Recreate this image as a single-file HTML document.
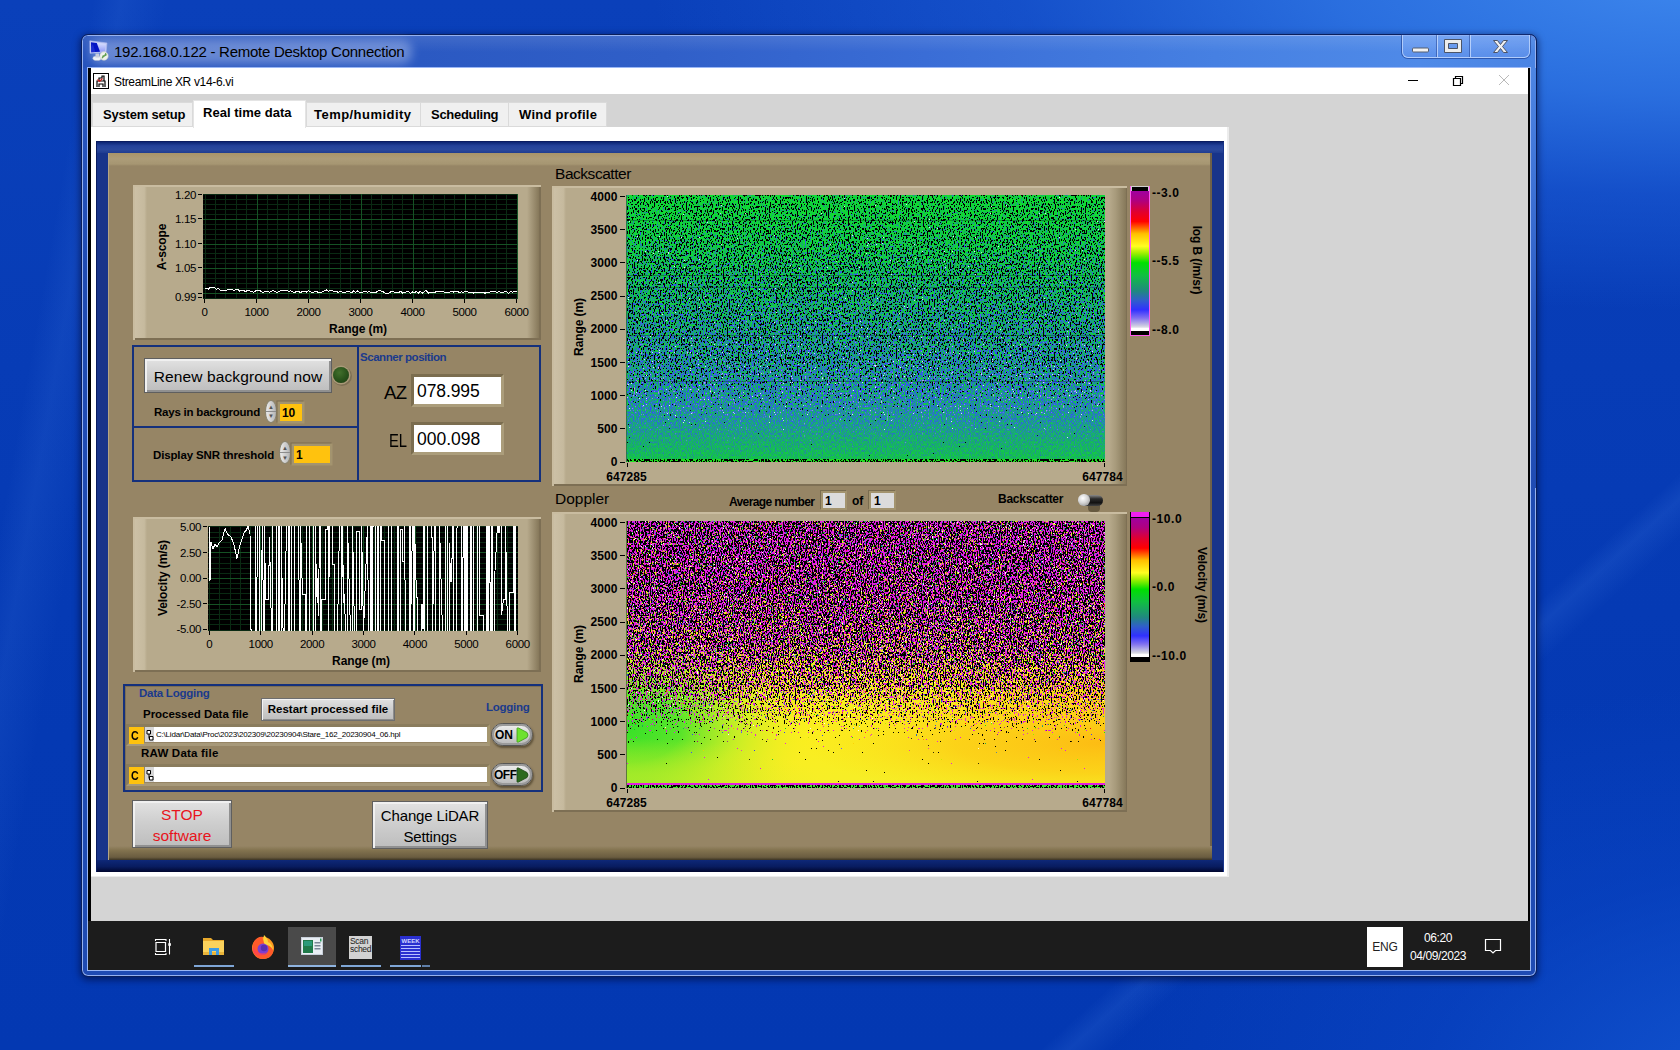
<!DOCTYPE html>
<html lang="en">
<head>
<meta charset="utf-8">
<title>192.168.0.122 - Remote Desktop Connection</title>
<style>
*{box-sizing:border-box;margin:0;padding:0}
html,body{width:1680px;height:1050px;overflow:hidden}
body{position:relative;font-family:"Liberation Sans",sans-serif;color:#000;font-size:12px;
 background:
  linear-gradient(138deg, rgba(90,150,245,0) 0, rgba(90,150,245,0) 77.500%, rgba(90,150,245,.13) 78.500%, rgba(90,150,245,0) 80%, rgba(90,150,245,0) 100%),
  linear-gradient(100deg, rgba(90,150,245,0) 0, rgba(90,150,245,0) 5%, rgba(90,150,245,.1) 6.500%, rgba(90,150,245,0) 9%, rgba(90,150,245,0) 100%),
  radial-gradient(ellipse 700px 420px at 1800px 1100px, rgba(24,96,220,.75) 0, rgba(12,74,204,.4) 55%, rgba(6,60,190,0) 100%),
  radial-gradient(ellipse 1050px 330px at 1700px -20px, rgba(62,136,238,.98) 0, rgba(50,122,232,.8) 35%, rgba(34,100,222,.45) 65%, rgba(12,70,196,0) 100%),
  linear-gradient(180deg,#0a40ba 0,#073cb6 35%,#0439b3 70%,#0338b2 100%);
}
.abs,.t,div,span,svg{position:absolute}
.t{white-space:nowrap;line-height:1}
.b{font-weight:bold}
.c{text-align:center}
/* outer RDP window */
#win{left:81px;top:34px;width:1456px;height:943px;border-radius:7px;
 background:#1f4bb3;
 border:1px solid #0a1f5c;box-shadow:0 2px 7px 1px rgba(0,8,50,.6), inset 0 0 0 1px rgba(170,195,250,.85)}
#wtitle{left:83px;top:36px;width:1452px;height:32px;border-radius:5px 5px 0 0;
 background:linear-gradient(90deg,#2653bd 0,#2a58c1 20%,#305fc8 40%,#3a6dd6 58%,#4680e2 78%,#4f8ae8 92%,#4a84e4 100%)}
#wright{left:1531px;top:68px;width:5px;height:420px;background:linear-gradient(180deg,#4e86e4 0,#3f74d8 25%,#2a5ac2 60%,#1f4bb3 100%)}
#wleft{left:83px;top:68px;width:5px;height:200px;background:linear-gradient(180deg,#2a58c2 0,#1f4bb3 100%)}
#client{left:88px;top:68px;width:1442px;height:902px;background:#d4d4d4;box-shadow:0 0 0 1px rgba(160,188,248,.95)}
/* LabVIEW */
.tan{background:#968565}
.plotpanel{background:#b7aa8c;box-shadow:inset 2px 2px 0 #c9bca0, inset -2px -2px 0 #7d6f54}
.lvbtn{background:linear-gradient(180deg,#e2e2e2 0,#cfcfcf 45%,#bdbdbd 100%);border:1px solid #6e6e6e;box-shadow:inset 1px 1px 0 #f4f4f4, inset -1px -1px 0 #8d8d8d;text-align:center}
.lbl{font-weight:bold;font-size:11.5px;letter-spacing:-.1px}
.tick{font-weight:bold;font-size:12px;letter-spacing:.55px}
.sm{font-size:11.5px}
.tk{font-size:11.5px;letter-spacing:-.35px}
.tkb{font-size:12px;font-weight:bold;letter-spacing:.1px}
.grp{border:2px solid #14307c}
.ybox{background:#ffc20e;box-shadow:0 0 0 2.5px #a3946f, -1px -1px 0 2.5px #7a6d50}
.wbox{background:#fff;box-shadow:0 0 0 3px #a99a76, -1px -1px 0 3px #7a6d50, 1px 1px 0 3px #b8aa88}
</style>
</head>
<body>
<!-- ===== outer Remote Desktop window ===== -->
<div id="win"></div>
<div id="wtitle"></div><div id="wright"></div><div id="wleft"></div>
<div class="abs" style="left:83px;top:36px;width:1452px;height:16px;border-radius:5px 5px 0 0;background:linear-gradient(180deg,rgba(255,255,255,.1),rgba(255,255,255,0))"></div>
<!-- title glow + text -->
<div class="abs" style="left:90px;top:40px;width:322px;height:24px;border-radius:10px;background:rgba(235,240,255,.33);filter:blur(5px)"></div>
<svg style="left:88px;top:39px" width="24" height="24" viewBox="0 0 24 24">
 <defs><linearGradient id="mon" x1="0" y1="0" x2="0" y2="1"><stop offset="0" stop-color="#dfe6ff"/><stop offset="1" stop-color="#8f98f6"/></linearGradient></defs>
 <ellipse cx="9" cy="19.300" rx="4.200" ry="2.300" fill="#eef0f6" stroke="#aab0c4" stroke-width=".4"/>
 <path d="M7.500 14.500h3.500v4h-3.500z" fill="#c9cede"/>
 <path d="M1.800 1.800L19 4l-1 9.300L2 14.300z" fill="#c4ccf4" stroke="#aeb8ee" stroke-width=".6" stroke-linejoin="round"/>
 <path d="M3 3.200L17.800 5l-.8 7.500L3.200 13.200z" fill="url(#mon)"/>
 <path d="M3 3.200L8.800 3.900 12 12.700 3.200 13.200z" fill="#0414c4"/>
 <path d="M3.100 8l1.800-3 2.500 8-4.200.2z" fill="#2a3ad8" opacity=".6"/>
 <circle cx="16" cy="17" r="4.200" fill="#eef1ec" stroke="#c8ccc6" stroke-width=".6"/>
 <path d="M14 19.200l1.200-2.900.9 1.100zM16.200 17.200l1.500-3 .6 2z" fill="#5a9a4a" stroke="#5a9a4a" stroke-width=".8" stroke-linejoin="round"/>
</svg>
<div class="t" id="rdptitle" style="left:114px;top:44px;font-size:15px;color:#000;letter-spacing:-0.26px">192.168.0.122 - Remote Desktop Connection</div>
<!-- caption buttons -->
<div class="abs" style="left:1402px;top:35px;width:128px;height:23px;border:1px solid rgba(200,220,255,.75);border-top:none;border-radius:0 0 6px 6px;background:linear-gradient(180deg,rgba(140,180,250,.55),rgba(110,155,240,.45));box-shadow:0 0 0 1px rgba(20,50,130,.55)"></div>
<div class="abs" style="left:1437px;top:35px;width:1px;height:22px;background:rgba(200,220,255,.8);box-shadow:-1px 0 0 rgba(30,60,140,.5)"></div>
<div class="abs" style="left:1470px;top:35px;width:1px;height:22px;background:rgba(200,220,255,.8);box-shadow:-1px 0 0 rgba(30,60,140,.5)"></div>
<svg style="left:1402px;top:35px" width="128" height="23" viewBox="0 0 128 23">
 <rect x="10.5" y="13" width="16" height="4" rx="1" fill="#f2f2f2" stroke="#555e70" stroke-width="1"/>
 <path d="M42.5 4.500h17v13h-17zM46.500 8.500h9v5h-9z" fill="#ededed" fill-rule="evenodd" stroke="#4c5568" stroke-width="1"/>
 <path d="M91.500 5.500h4l3 4 3-4h4l-5 6 5 6h-4l-3-4-3 4h-4l5-6z" fill="#f0f0f0" stroke="#4c5568" stroke-width="1" stroke-linejoin="round"/>
</svg>
<!-- ===== client (remote session) ===== -->
<div id="client"></div>
<div class="abs" style="left:88px;top:68px;width:3px;height:853px;background:#000"></div>
<div class="abs" style="left:1528px;top:68px;width:2px;height:853px;background:#000"></div>
<!-- inner title bar -->
<div class="abs" style="left:91px;top:68px;width:1437px;height:26px;background:#fff"></div>
<svg style="left:93px;top:73px" width="16" height="16" viewBox="0 0 16 16">
 <rect x=".5" y=".5" width="15" height="15" fill="#fff" stroke="#000" stroke-width="1"/>
 <path d="M4 14V8h8v6M6 14v-3h4v3M6 8V5h3V3h2v5" fill="none" stroke="#000" stroke-width="1.2"/>
 <path d="M4.500 6.500l2 2 3-3" fill="none" stroke="#d02020" stroke-width="1.2"/>
</svg>
<div class="t" id="vititle" style="left:114px;top:76px;font-size:12px;letter-spacing:-0.34px">StreamLine XR v14-6.vi</div>
<svg style="left:1400px;top:68px" width="128" height="26" viewBox="0 0 128 26">
 <path d="M8 12.500h10" stroke="#000" stroke-width="1"/>
 <path d="M53.500 10.500h7v7h-7zM55.500 10.500v-2h7v7h-2" fill="none" stroke="#000" stroke-width="1.200"/>
 <path d="M99 7l10 10M109 7l-10 10" stroke="#b9b9b9" stroke-width="1"/>
</svg>
<!-- tabs -->
<div class="abs" style="left:91px;top:127px;width:1138px;height:750px;background:#ececec"></div>
<div class="abs" style="left:91px;top:127px;width:1135.500px;height:748.500px;background:#fff"></div>
<div class="abs" style="left:92px;top:101.500px;width:101px;height:25px;background:#f0f0f0;border:1px solid #dadada"></div>
<div class="abs" style="left:306px;top:101.500px;width:115px;height:25px;background:#f0f0f0;border:1px solid #dadada"></div>
<div class="abs" style="left:420px;top:101.500px;width:89px;height:25px;background:#f0f0f0;border:1px solid #dadada"></div>
<div class="abs" style="left:508px;top:101.500px;width:99px;height:25px;background:#f0f0f0;border:1px solid #dadada"></div>
<div class="abs" style="left:193px;top:100px;width:113px;height:28px;background:#fff;border:1px solid #e4e4e4;border-bottom:none"></div>
<div class="t b" id="tab1" style="margin-top:1px;left:103px;top:107px;font-size:13px;letter-spacing:-0.19px">System setup</div>
<div class="t b" id="tab2" style="margin-top:1px;left:203px;top:105px;font-size:13px;letter-spacing:0.03px">Real time data</div>
<div class="t b" id="tab3" style="margin-top:1px;left:314px;top:107px;font-size:13px;letter-spacing:0.46px">Temp/humidity</div>
<div class="t b" id="tab4" style="margin-top:1px;left:431px;top:107px;font-size:13px;letter-spacing:-0.28px">Scheduling</div>
<div class="t b" id="tab5" style="margin-top:1px;left:519px;top:107px;font-size:13px;letter-spacing:0.27px">Wind profile</div>
<!-- ===== LabVIEW front panel ===== -->
<div class="abs" style="left:96px;top:141px;width:1128px;height:731px;background:#18348a;box-shadow:inset 1px 1px 0 #0a1c60"></div>
<div class="abs" style="left:97px;top:142px;width:1126px;height:11px;background:linear-gradient(180deg,#0c2574 0,#24429a 35%,#2a489c 70%,#1f3c90 100%)"></div>
<div class="abs" style="left:97px;top:860px;width:1126px;height:12px;background:linear-gradient(180deg,#0e2878 0,#081c60 55%,#01062e 100%)"></div>
<div class="abs tan" style="left:108px;top:153px;width:1104px;height:707px;box-shadow:inset 1px 0 0 #b5a583, inset -2px 0 0 #6f6148"></div>
<div class="abs" style="left:109px;top:153px;width:1101px;height:13px;background:linear-gradient(180deg,#a89469 0,#ac9c78 45%,#a69672 85%,#968565 100%)"></div>
<div class="abs" style="left:109px;top:846px;width:1103px;height:14px;background:linear-gradient(180deg,#968565 0,#83734f 30%,#6a5c40 80%,#3c3424 100%)"></div>

<!-- A-scope panel -->
<div class="abs plotpanel" style="left:133px;top:185px;width:408px;height:155px"></div>
<div class="abs" style="left:135px;top:187px;width:12px;height:151px;background:linear-gradient(90deg,#ccc0a6 0,#c6ba9e 78%,#b7aa8c 100%)"></div>
<div class="abs" style="left:527px;top:187px;width:12px;height:151px;background:linear-gradient(90deg,#b7aa8c,#86785a)"></div>
<svg style="left:203px;top:194px" width="315" height="105" viewBox="0 0 315 105">
 <rect width="315" height="105" fill="#000"/>
 <g stroke="#0a2a13" stroke-width="1"><path d="M2.5 0V105"/><path d="M12.5 0V105"/><path d="M22.5 0V105"/><path d="M33.5 0V105"/><path d="M43.5 0V105"/><path d="M64.5 0V105"/><path d="M74.5 0V105"/><path d="M85.5 0V105"/><path d="M95.5 0V105"/><path d="M116.5 0V105"/><path d="M126.5 0V105"/><path d="M137.5 0V105"/><path d="M147.5 0V105"/><path d="M168.5 0V105"/><path d="M178.5 0V105"/><path d="M189.5 0V105"/><path d="M199.5 0V105"/><path d="M220.5 0V105"/><path d="M230.5 0V105"/><path d="M241.5 0V105"/><path d="M251.5 0V105"/><path d="M272.5 0V105"/><path d="M282.5 0V105"/><path d="M293.5 0V105"/><path d="M303.5 0V105"/><path d="M0 0.5H315"/><path d="M0 5.5H315"/><path d="M0 10.5H315"/><path d="M0 15.5H315"/><path d="M0 20.5H315"/><path d="M0 30.5H315"/><path d="M0 35.5H315"/><path d="M0 40.5H315"/><path d="M0 45.5H315"/><path d="M0 54.5H315"/><path d="M0 59.5H315"/><path d="M0 64.5H315"/><path d="M0 69.5H315"/><path d="M0 79.5H315"/><path d="M0 84.5H315"/><path d="M0 89.5H315"/><path d="M0 94.5H315"/><path d="M0 104.5H315"/></g>
 <g stroke="#155224" stroke-width="1"><path d="M54.5 0V105"/><path d="M106.5 0V105"/><path d="M158.5 0V105"/><path d="M210.5 0V105"/><path d="M262.5 0V105"/><path d="M314.5 0V105"/><path d="M0 25.5H315"/><path d="M0 50.5H315"/><path d="M0 74.5H315"/><path d="M0 99.5H315"/></g>
 <polyline fill="none" stroke="#fff" stroke-width="1" shape-rendering="crispEdges" points="1.5,93.8 3.5,94.3 5.4,95.1 7.4,93.2 9.3,93.3 11.3,93.6 13.3,95.2 15.2,94.2 17.2,96.1 19.2,96.1 21.1,96.3 23.1,97.2 25,95 27,95.6 29,95.3 30.9,96.8 32.9,95.4 34.9,95.3 36.8,97.1 38.8,96.2 40.7,96.6 42.7,97.6 44.7,96.2 46.6,97 48.6,97.6 50.6,98.3 52.5,96.9 54.5,96.3 56.4,96.1 58.4,97.9 60.4,98.2 62.3,97.8 64.3,97.5 66.3,98.2 68.2,97.4 70.2,96.4 72.1,97.8 74.1,98.3 76.1,97.3 78,96.5 80,96.9 82,96.6 83.9,96.8 85.9,97.4 87.8,96.8 89.8,97.8 91.8,98.5 93.7,97.3 95.7,97.5 97.7,98.8 99.6,97.1 101.6,97.2 103.5,98.1 105.5,96.8 107.5,97.6 109.4,98.9 111.4,98 113.3,97.1 115.3,98.8 117.3,98.8 119.2,97.7 121.2,97.1 123.2,95.8 125.1,97.3 127.1,96.4 129,96.9 131,97.1 133,97 134.9,98.3 136.9,97.5 138.9,97.8 140.8,98.8 142.8,98 144.7,97.2 146.7,97.7 148.7,98.8 150.6,97 152.6,98.2 154.6,97 156.5,98.2 158.5,98.9 160.4,97.6 162.4,97.4 164.4,98.2 166.3,97.7 168.3,98.8 170.3,98.9 172.2,98.8 174.2,97.5 176.1,96.6 178.1,97.1 180.1,97.6 182,99.1 184,99.1 186,99.2 187.9,97.5 189.9,97.5 191.8,98.4 193.8,98.9 195.8,98.5 197.7,97.2 199.7,99.1 201.7,98.7 203.6,97.5 205.6,97.8 207.5,99.2 209.5,98 211.5,98.7 213.4,97.4 215.4,99.1 217.3,97.4 219.3,99.2 221.3,97.8 223.2,96.2 225.2,99.2 227.2,98.2 229.1,98 231.1,98.9 233,97.6 235,97.6 237,97.7 238.9,97.4 240.9,97.9 242.9,98.4 244.8,98 246.8,98.2 248.7,97 250.7,98.1 252.7,97.1 254.6,97.5 256.6,98.7 258.6,97.8 260.5,98.3 262.5,97.3 264.4,97.6 266.4,98.8 268.4,98.3 270.3,99.1 272.3,98.4 274.3,98.2 276.2,98.1 278.2,98.1 280.1,98.6 282.1,99.2 284.1,98.3 286,98.9 288,97.4 290,97.3 291.9,97.3 293.9,98.8 295.8,97.4 297.8,98.5 299.8,99 301.7,97.6 303.7,98 305.7,99.3 307.6,97.5 309.6,98.2 311.5,97.5 313.5,97.5"/>
</svg>
<div class="t tk" style="left:136px;top:189.5px;width:60px;text-align:right;">1.20</div>
<div class="t tk" style="left:136px;top:214px;width:60px;text-align:right;">1.15</div>
<div class="t tk" style="left:136px;top:238.5px;width:60px;text-align:right;">1.10</div>
<div class="t tk" style="left:136px;top:262.5px;width:60px;text-align:right;">1.05</div>
<div class="t tk" style="left:136px;top:291.5px;width:60px;text-align:right;">0.99</div>
<div class="abs" style="left:197.5px;top:194px;width:4.5px;height:1px;background:#000"></div>
<div class="abs" style="left:197.5px;top:218px;width:4.5px;height:1px;background:#000"></div>
<div class="abs" style="left:197.5px;top:243px;width:4.5px;height:1px;background:#000"></div>
<div class="abs" style="left:197.5px;top:267px;width:4.5px;height:1px;background:#000"></div>
<div class="abs" style="left:197.5px;top:293px;width:4.5px;height:1px;background:#000"></div>
<div class="abs" style="left:197.5px;top:297px;width:4.5px;height:1px;background:#000"></div>
<div class="t tk c" style="left:174.5px;top:306.5px;width:60px;">0</div>
<div class="abs" style="left:204px;top:299px;width:1px;height:4px;background:#000"></div>
<div class="t tk c" style="left:226.5px;top:306.5px;width:60px;">1000</div>
<div class="abs" style="left:256px;top:299px;width:1px;height:4px;background:#000"></div>
<div class="t tk c" style="left:278.5px;top:306.5px;width:60px;">2000</div>
<div class="abs" style="left:308px;top:299px;width:1px;height:4px;background:#000"></div>
<div class="t tk c" style="left:330.5px;top:306.5px;width:60px;">3000</div>
<div class="abs" style="left:360px;top:299px;width:1px;height:4px;background:#000"></div>
<div class="t tk c" style="left:382.5px;top:306.5px;width:60px;">4000</div>
<div class="abs" style="left:412px;top:299px;width:1px;height:4px;background:#000"></div>
<div class="t tk c" style="left:434.5px;top:306.5px;width:60px;">5000</div>
<div class="abs" style="left:464px;top:299px;width:1px;height:4px;background:#000"></div>
<div class="t tk c" style="left:486.5px;top:306.5px;width:60px;">6000</div>
<div class="abs" style="left:516px;top:299px;width:1px;height:4px;background:#000"></div>
<div class="t lbl c" style="left:308px;top:323px;width:100px;font-size:12px">Range (m)</div>
<div class="t lbl c" style="left:112px;top:241px;width:100px;font-size:12px;transform:rotate(-90deg)">A-scope</div>

<!-- controls group -->
<div class="abs grp" style="left:132px;top:345px;width:227px;height:83px"></div>
<div class="abs grp" style="left:132px;top:426px;width:227px;height:56px"></div>
<div class="abs grp" style="left:357px;top:345px;width:184px;height:137px"></div>
<div class="abs lvbtn" style="left:144px;top:357px;width:188px;height:35px;margin-top:.5px;border-color:#5f5f5f;box-shadow:inset 2px 2px 0 #f0f0f0, inset -2px -2px 0 #909090"></div>
<div class="t c" id="renew" style="left:144px;top:368.500px;width:188px;font-size:15.5px;letter-spacing:0.11px">Renew background now</div>
<div class="abs" style="left:333px;top:367px;width:16px;height:16px;border-radius:50%;background:radial-gradient(circle at 40% 35%,#42702c 0,#2a541c 50%,#1a3a12 100%);box-shadow:0 0 0 1.5px #a99a78, 1px 1px 0 2px #7d6f54"></div>
<div class="t lbl" id="rays" style="left:154px;top:407px;font-size:11.5px;letter-spacing:-0.22px">Rays in background</div>
<div class="abs" style="left:265px;top:399.500px;width:11.500px;height:23px;border-radius:50%;background:linear-gradient(90deg,#ececec,#b4b4b4);border:1px solid #8a8570"></div><div class="abs" style="left:266px;top:410.500px;width:9.500px;height:1px;background:#8c8c8c"></div>
<div class="t" style="left:267px;top:402.500px;font-size:6px;color:#555;line-height:9.500px;width:8px;text-align:center">▲<br>▼</div>
<div class="abs ybox" style="left:280px;top:404px;width:22px;height:17px"></div>
<div class="t lbl" style="left:282px;top:407px;font-size:12px">10</div>
<div class="t lbl" id="snr" style="left:153px;top:450px;font-size:11.5px;letter-spacing:-0.14px">Display SNR threshold</div>
<div class="abs" style="left:279px;top:441px;width:11.500px;height:23px;border-radius:50%;background:linear-gradient(90deg,#ececec,#b4b4b4);border:1px solid #8a8570"></div><div class="abs" style="left:280px;top:452px;width:9.500px;height:1px;background:#8c8c8c"></div>
<div class="t" style="left:281px;top:444px;font-size:6px;color:#555;line-height:9.500px;width:8px;text-align:center">▲<br>▼</div>
<div class="abs ybox" style="left:294px;top:446px;width:36px;height:17px"></div>
<div class="t lbl" style="left:296px;top:449px;font-size:12px">1</div>
<div class="t lbl" id="scanpos" style="left:360px;top:352px;font-size:11.5px;color:#1b3a8c;letter-spacing:-0.45px">Scanner position</div>
<div class="t" id="azl" style="left:384px;top:384px;font-size:18.5px;letter-spacing:-.6px">AZ</div>
<div class="abs" style="left:410.5px;top:373.5px;width:93.500px;height:33.500px;background:#fff;border:3.5px solid;border-color:#7b6d4f #ab9d7b #ab9d7b #7b6d4f"></div>
<div class="t" id="azv" style="left:417px;top:382.500px;font-size:17.5px;letter-spacing:-0.09px">078.995</div>
<div class="t" id="ell" style="left:388.500px;top:432px;font-size:18.5px;transform:scaleX(.8);transform-origin:left center">EL</div>
<div class="abs" style="left:410.5px;top:421.500px;width:93.500px;height:33.500px;background:#fff;border:3.5px solid;border-color:#7b6d4f #ab9d7b #ab9d7b #7b6d4f"></div>
<div class="t" id="elv" style="left:417px;top:430.500px;font-size:17.5px;letter-spacing:-0.01px">000.098</div>

<!-- velocity panel -->
<div class="abs plotpanel" style="left:133px;top:517px;width:408px;height:155px"></div>
<div class="abs" style="left:135px;top:519px;width:12px;height:151px;background:linear-gradient(90deg,#ccc0a6 0,#c6ba9e 78%,#b7aa8c 100%)"></div>
<div class="abs" style="left:527px;top:519px;width:12px;height:151px;background:linear-gradient(90deg,#b7aa8c,#86785a)"></div>
<svg style="left:208px;top:526px" width="310" height="105" viewBox="0 0 310 105">
 <rect width="310" height="105" fill="#000"/>
 <g stroke="#0a2a13" stroke-width="1"><path d="M1.5 0V105"/><path d="M11.5 0V105"/><path d="M22.5 0V105"/><path d="M32.5 0V105"/><path d="M42.5 0V105"/><path d="M63.5 0V105"/><path d="M73.5 0V105"/><path d="M83.5 0V105"/><path d="M94.5 0V105"/><path d="M114.5 0V105"/><path d="M124.5 0V105"/><path d="M135.5 0V105"/><path d="M145.5 0V105"/><path d="M166.5 0V105"/><path d="M176.5 0V105"/><path d="M186.5 0V105"/><path d="M196.5 0V105"/><path d="M217.5 0V105"/><path d="M227.5 0V105"/><path d="M238.5 0V105"/><path d="M248.5 0V105"/><path d="M268.5 0V105"/><path d="M279.5 0V105"/><path d="M289.5 0V105"/><path d="M299.5 0V105"/><path d="M0 0.5H310"/><path d="M0 6.5H310"/><path d="M0 11.5H310"/><path d="M0 16.5H310"/><path d="M0 21.5H310"/><path d="M0 31.5H310"/><path d="M0 37.5H310"/><path d="M0 42.5H310"/><path d="M0 47.5H310"/><path d="M0 57.5H310"/><path d="M0 62.5H310"/><path d="M0 67.5H310"/><path d="M0 73.5H310"/><path d="M0 83.5H310"/><path d="M0 88.5H310"/><path d="M0 93.5H310"/><path d="M0 98.5H310"/><path d="M0 104.5H310"/></g>
 <g stroke="#155224" stroke-width="1"><path d="M52.5 0V105"/><path d="M104.5 0V105"/><path d="M155.5 0V105"/><path d="M207.5 0V105"/><path d="M258.5 0V105"/><path d="M310.5 0V105"/><path d="M0 26.5H310"/><path d="M0 52.5H310"/><path d="M0 78.5H310"/></g>
 <polyline fill="none" stroke="#fff" stroke-width="1" shape-rendering="crispEdges" points="1,0.5 2,55.1 3,15.9 5,23.2 7,18 9,21.1 11,17 14,13.9 17,2.6 20,8.7 23,10.8 26,19 29,32.4 32,19 36,6.7 38,4.6 40,0.5 42,7.7 43,103.5 44.5,105.6 47.5,105.6 47.5,-1.6 48.5,105.6 49.5,-1.6 51.5,-1.6 51.5,105.6 52.5,105.6 52.5,105.6 53.5,105.6 53.5,24.6 54.5,24.6 54.5,-1.6 55.5,105.6 56.5,105.6 56.5,-1.6 57.5,73.7 60.5,73.7 60.5,39 61.5,39 61.5,11.4 63.5,105.6 64.5,105.6 64.5,-1.6 68.5,-1.6 68.5,105.6 70.5,105.6 70.5,-1.6 71.5,-1.6 71.5,105.6 73.5,105.6 73.5,-1.6 74.5,101.1 76.5,105.6 78.5,-1.6 80.5,-1.6 80.5,105.6 81.5,105.6 81.5,-1.6 83.5,-1.6 83.5,105.6 86.5,105.6 86.5,-1.6 90.5,-1.6 91.5,105.6 92.5,105.6 92.5,-1.6 94.5,68.5 97.5,68.5 97.5,105.6 98.5,105.6 98.5,-1.6 99.5,-1.6 99.5,-1.6 101.5,-1.6 101.5,105.6 105.5,105.6 105.5,-1.6 106.5,-1.6 106.5,-1.6 107.5,-1.6 107.5,105.6 108.5,37.8 110.5,90.1 111.5,-1.6 112.5,-1.6 112.5,105.6 113.5,105.6 113.5,73.1 117.5,73.1 117.5,3 119.5,3 119.5,-1.6 120.5,-1.6 120.5,105.6 121.5,-1.6 124.5,-1.6 124.5,38.9 126.5,38.9 126.5,105.6 129.5,105.6 131.5,-1.6 133.5,-1.6 133.5,105.6 134.5,-1.6 135.5,76.2 136.5,76.2 136.5,68.5 137.5,105.6 139.5,105.6 139.5,-1.6 142.5,105.6 144.5,105.6 144.5,-1.6 146.5,105.6 148.5,105.6 148.5,5 151.5,5 151.5,83 153.5,83 153.5,-1.6 155.5,105.6 159.5,-1.6 160.5,105.6 161.5,105.6 161.5,105.6 162.5,105.6 162.5,-1.6 163.5,-1.6 163.5,105.6 164.5,105.6 164.5,2.6 165.5,-1.6 167.5,-1.6 167.5,105.6 169.5,105.6 169.5,-1.6 170.5,-1.6 170.5,105.6 172.5,105.6 172.5,-1.6 173.5,-1.6 173.5,14.3 176.5,14.3 176.5,105.6 180.5,105.6 180.5,-1.6 183.5,-1.6 183.5,105.6 185.5,105.6 185.5,105.6 189.5,105.6 189.5,-1.6 190.5,-1.6 190.5,105.6 192.5,105.6 192.5,3.8 194.5,3.8 194.5,35.3 196.5,35.3 196.5,-1.6 197.5,105.6 201.5,105.6 201.5,-1.6 202.5,-1.6 202.5,105.6 204.5,-1.6 205.5,-1.6 205.5,105.6 206.5,105.6 206.5,-1.6 208.5,71.8 209.5,71.8 209.5,105.6 213.5,105.6 213.5,78.2 214.5,78.2 214.5,102.1 215.5,102.1 215.5,-1.6 216.5,-1.6 216.5,105.6 217.5,105.6 217.5,105.6 219.5,105.6 219.5,-1.6 223.5,-1.6 223.5,11.3 224.5,11.3 224.5,105.6 226.5,-1.6 227.5,-1.6 227.5,105.6 231.5,105.6 231.5,-1.6 234.5,105.6 237.5,105.6 237.5,-1.6 239.5,-1.6 239.5,105.6 241.5,105.6 241.5,16.9 242.5,55.6 243.5,55.6 243.5,32 244.5,32 244.5,-1.6 245.5,-1.6 245.5,105.6 248.5,105.6 248.5,3.3 250.5,-1.6 251.5,-1.6 251.5,-1.6 252.5,-1.6 252.5,-1.6 253.5,-1.6 253.5,105.6 254.5,105.6 254.5,31.3 255.5,31.3 255.5,-1.6 256.5,-1.6 256.5,105.6 257.5,105.6 257.5,-1.6 258.5,-1.6 258.5,105.6 259.5,105.6 259.5,-1.6 262.5,-1.6 262.5,105.6 263.5,105.6 263.5,-1.6 264.5,-1.6 265.5,-1.6 265.5,105.6 269.5,105.6 269.5,-1.6 271.5,-1.6 271.5,89.3 275.5,89.3 275.5,105.6 278.5,105.6 278.5,-1.6 279.5,-1.6 279.5,105.6 280.5,105.6 280.5,-1.6 281.5,-1.6 281.5,56.8 282.5,56.8 282.5,105.6 283.5,105.6 283.5,-1.6 284.5,-1.6 284.5,105.6 286.5,105.6 286.5,54 289.5,-1.6 290.5,-1.6 290.5,6.2 291.5,6.2 291.5,-1.6 293.5,-1.6 293.5,89.1 295.5,73.7 297.5,73.7 297.5,-1.6 299.5,105.6 301.5,105.6 301.5,66.2 305.5,66.2 305.5,-1.6 306.5,-1.6 306.5,105.6 307.5,105.6 307.5,-1.6"/>
</svg>
<div class="t tk" style="left:141px;top:521.5px;width:60px;text-align:right;">5.00</div>
<div class="t tk" style="left:141px;top:547.5px;width:60px;text-align:right;">2.50</div>
<div class="t tk" style="left:141px;top:573px;width:60px;text-align:right;">0.00</div>
<div class="t tk" style="left:141px;top:598.5px;width:60px;text-align:right;">-2.50</div>
<div class="t tk" style="left:141px;top:624px;width:60px;text-align:right;">-5.00</div>
<div class="abs" style="left:202.5px;top:526px;width:4.5px;height:1px;background:#000"></div>
<div class="abs" style="left:202.5px;top:552px;width:4.5px;height:1px;background:#000"></div>
<div class="abs" style="left:202.5px;top:578px;width:4.5px;height:1px;background:#000"></div>
<div class="abs" style="left:202.5px;top:603px;width:4.5px;height:1px;background:#000"></div>
<div class="abs" style="left:202.5px;top:629px;width:4.5px;height:1px;background:#000"></div>
<div class="t tk c" style="left:179.3px;top:638.5px;width:60px;">0</div>
<div class="abs" style="left:209px;top:631px;width:1px;height:4px;background:#000"></div>
<div class="t tk c" style="left:230.7px;top:638.5px;width:60px;">1000</div>
<div class="abs" style="left:260px;top:631px;width:1px;height:4px;background:#000"></div>
<div class="t tk c" style="left:282.1px;top:638.5px;width:60px;">2000</div>
<div class="abs" style="left:312px;top:631px;width:1px;height:4px;background:#000"></div>
<div class="t tk c" style="left:333.5px;top:638.5px;width:60px;">3000</div>
<div class="abs" style="left:363px;top:631px;width:1px;height:4px;background:#000"></div>
<div class="t tk c" style="left:384.9px;top:638.5px;width:60px;">4000</div>
<div class="abs" style="left:414px;top:631px;width:1px;height:4px;background:#000"></div>
<div class="t tk c" style="left:436.3px;top:638.5px;width:60px;">5000</div>
<div class="abs" style="left:466px;top:631px;width:1px;height:4px;background:#000"></div>
<div class="t tk c" style="left:487.7px;top:638.5px;width:60px;">6000</div>
<div class="abs" style="left:517px;top:631px;width:1px;height:4px;background:#000"></div>
<div class="t lbl c" style="left:311px;top:655px;width:100px;font-size:12px">Range (m)</div>
<div class="t lbl c" style="left:113px;top:572px;width:100px;font-size:12px;transform:rotate(-90deg)">Velocity (m/s)</div>

<!-- data logging -->
<div class="abs grp" style="left:123px;top:684px;width:420px;height:108px;border-width:2px;box-shadow:inset 1px 1px 0 #7d6f54"></div>
<div class="t lbl" id="dlog" style="left:139px;top:688px;font-size:11.5px;color:#1b3a8c;letter-spacing:-0.25px">Data Logging</div>
<div class="t lbl" id="pdf" style="left:143px;top:708.500px;font-size:11.5px;letter-spacing:-0.04px">Processed Data file</div>
<div class="abs lvbtn" style="left:261px;top:698px;width:134px;height:23px"></div>
<div class="t lbl c" id="restart" style="left:261px;top:704px;width:134px;font-size:11.5px;letter-spacing:0.02px">Restart processed file</div>
<div class="t lbl" id="logging" style="left:486px;top:702px;font-size:11.5px;color:#1b3a8c;letter-spacing:-0.26px">Logging</div>
<div class="abs" style="left:126px;top:724px;width:364px;height:22px;border:3px solid;border-color:#8a7c5d #a4966f #a7997a #8a7c5d"></div>
<div class="abs" style="left:129px;top:727px;width:15px;height:17px;background:#ffc20e"></div>
<div class="t" style="left:131px;top:730px;font-size:12.5px;font-weight:bold;transform:scaleX(.85);transform-origin:left center">C</div>
<div class="abs" style="left:145px;top:727px;width:9px;height:15px;background:#d6d6d6"></div>
<svg style="left:145.5px;top:728.5px" width="8" height="12" viewBox="0 0 8 12"><path d="M1 1.500h3.500v3.500h-3.500zM3 5v4.500M3.500 7.500h3.500v3.500h-3.500z" fill="#fff" stroke="#000" stroke-width="1"/></svg>
<div class="abs" style="left:153.500px;top:727px;width:333.500px;height:15px;background:#fff"></div>
<div class="t" id="path" style="left:156px;top:731px;font-size:8px;letter-spacing:-0.21px">C:\Lidar\Data\Proc\2023\202309\20230904\Stare_162_20230904_06.hpl</div>
<div class="t lbl" id="rawf" style="left:141px;top:748px;font-size:11.5px;letter-spacing:0.21px">RAW Data file</div>
<div class="abs" style="left:126px;top:764px;width:364px;height:22px;border:3px solid;border-color:#8a7c5d #a4966f #a7997a #8a7c5d"></div>
<div class="abs" style="left:129px;top:767px;width:15px;height:17px;background:#ffc20e"></div>
<div class="t" style="left:131px;top:770px;font-size:12.5px;font-weight:bold;transform:scaleX(.85);transform-origin:left center">C</div>
<div class="abs" style="left:145px;top:767px;width:9px;height:15px;background:#d6d6d6"></div>
<svg style="left:145.5px;top:768.5px" width="8" height="12" viewBox="0 0 8 12"><path d="M1 1.500h3.500v3.500h-3.500zM3 5v4.500M3.500 7.500h3.500v3.500h-3.500z" fill="#fff" stroke="#000" stroke-width="1"/></svg>
<div class="abs" style="left:153.500px;top:767px;width:333.500px;height:15px;background:#fff"></div>
<!-- ON / OFF -->
<div class="abs" style="left:491px;top:723px;width:42px;height:23px;border-radius:12px;background:linear-gradient(180deg,#f0f0f0,#b8b8b8);border:1px solid #555;box-shadow:1px 2px 2px rgba(60,50,30,.6), inset 0 0 0 2px #9a9a9a"></div>
<div class="t lbl" style="left:495px;top:729px;font-size:12px">ON</div>
<svg style="left:516px;top:727px" width="14" height="16" viewBox="0 0 14 16"><path d="M1 1.500Q1 .5 2.500 1L11 5.500Q13 8 11 10.500L2.500 15Q1 15.500 1 14.500z" fill="#6ee22e" stroke="#3c9a18" stroke-width=".8"/></svg>
<div class="abs" style="left:491px;top:763px;width:42px;height:23px;border-radius:12px;background:linear-gradient(180deg,#f0f0f0,#b8b8b8);border:1px solid #555;box-shadow:1px 2px 2px rgba(60,50,30,.6), inset 0 0 0 2px #9a9a9a"></div>
<div class="t lbl" style="left:494px;top:769px;font-size:12px;letter-spacing:-.5px">OFF</div>
<svg style="left:516px;top:767px" width="14" height="16" viewBox="0 0 14 16"><path d="M1 1.500Q1 .5 2.500 1L11 5.500Q13 8 11 10.500L2.500 15Q1 15.500 1 14.500z" fill="#2c6a1e" stroke="#1d4813" stroke-width=".8"/></svg>
<!-- STOP / Change -->
<div class="abs lvbtn" style="left:132px;top:800px;width:100px;height:48px;border-color:#5f5f5f;box-shadow:inset 2px 2px 0 #f0f0f0, inset -2px -2px 0 #909090"></div>
<div class="t c" id="stop" style="left:132px;top:804px;width:100px;font-size:15.5px;line-height:21px;color:#e8141c;white-space:normal">STOP<br>software</div>
<div class="abs lvbtn" style="left:372px;top:801px;width:116px;height:48px;border-color:#5f5f5f;box-shadow:inset 2px 2px 0 #f0f0f0, inset -2px -2px 0 #909090"></div>
<div class="t c" id="chg" style="left:372px;top:805px;width:116px;font-size:15px;letter-spacing:-.15px;line-height:21px;white-space:normal">Change LiDAR<br>Settings</div>
<!-- ===== right column: Backscatter ===== -->
<div class="t" id="bstitle" style="left:555px;top:166px;font-size:15.5px;letter-spacing:-0.46px">Backscatter</div>
<div class="abs plotpanel" style="left:552px;top:186px;width:575px;height:300px"></div>
<div class="abs" style="left:554px;top:188px;width:12px;height:296px;background:linear-gradient(90deg,#ccc0a6 0,#c6ba9e 78%,#b7aa8c 100%)"></div>
<div class="abs" style="left:1109px;top:188px;width:17px;height:296px;background:linear-gradient(90deg,#b7aa8c 0,#a79a7b 40%,#86785a 100%)"></div>
<svg style="left:626px;top:195px" width="479" height="267" viewBox="0 0 479 267">
 <defs>
  <linearGradient id="bsbase" x1="0" y1="0" x2="0" y2="1">
   <stop offset="0" stop-color="rgb(159,159,159)"/>
   <stop offset="0.125" stop-color="rgb(145,145,145)"/>
   <stop offset="0.25" stop-color="rgb(130,130,130)"/>
   <stop offset="0.375" stop-color="rgb(116,116,116)"/>
   <stop offset="0.5" stop-color="rgb(105,105,105)"/>
   <stop offset="0.625" stop-color="rgb(96,96,96)"/>
   <stop offset="0.75" stop-color="rgb(92,92,92)"/>
   <stop offset="0.81" stop-color="rgb(94,94,94)"/>
   <stop offset="0.875" stop-color="rgb(103,103,103)"/>
   <stop offset="0.9375" stop-color="rgb(116,116,116)"/>
   <stop offset="0.975" stop-color="rgb(125,125,125)"/>
   <stop offset="1" stop-color="rgb(129,129,129)"/>
  </linearGradient>
  <linearGradient id="bsblk" x1="0" y1="0" x2="0" y2="1">
   <stop offset="0" stop-color="#000" stop-opacity="0.42"/>
   <stop offset="0.25" stop-color="#000" stop-opacity="0.431"/>
   <stop offset="0.5" stop-color="#000" stop-opacity="0.422"/>
   <stop offset="0.625" stop-color="#000" stop-opacity="0.412"/>
   <stop offset="0.75" stop-color="#000" stop-opacity="0.345"/>
   <stop offset="0.81" stop-color="#000" stop-opacity="0.29"/>
   <stop offset="0.875" stop-color="#000" stop-opacity="0.255"/>
   <stop offset="1" stop-color="#000" stop-opacity="0.2"/>
  </linearGradient>
  <linearGradient id="bswht" x1="0" y1="0" x2="0" y2="1">
   <stop offset="0" stop-color="#000" stop-opacity="0.235"/>
   <stop offset="0.45" stop-color="#000" stop-opacity="0.25"/>
   <stop offset="0.7" stop-color="#000" stop-opacity="0.265"/>
   <stop offset="0.85" stop-color="#000" stop-opacity="0.25"/>
   <stop offset="1" stop-color="#000" stop-opacity="0.1"/>
  </linearGradient>
  <linearGradient id="bssm" x1="0" y1="0" x2="0" y2="1">
   <stop offset="0" stop-color="#2488b0" stop-opacity="0"/>
   <stop offset=".76" stop-color="#2488b0" stop-opacity="0"/>
   <stop offset=".86" stop-color="#1f98a0" stop-opacity=".4"/>
   <stop offset=".93" stop-color="#19ac72" stop-opacity=".55"/>
   <stop offset="1" stop-color="#14c04c" stop-opacity=".6"/>
  </linearGradient>
  <!-- value = base + k*(noise-.5) -> colour map -->
  <filter id="fbs" x="0" y="0" width="100%" height="100%" color-interpolation-filters="sRGB">
   <feTurbulence type="fractalNoise" baseFrequency="0.83 0.47" numOctaves="1" seed="11" result="n0"/>
   <feColorMatrix in="n0" type="matrix" values="1 0 0 0 0  1 0 0 0 0  1 0 0 0 0  0 0 0 0 1" result="n"/>
   <feComposite in="SourceGraphic" in2="n" operator="arithmetic" k1="0" k2="1" k3="1.15" k4="-0.575" result="v"/>
   <feComponentTransfer in="v">
    <feFuncR type="table" tableValues="1 .6 .2 .18 .1 .07 .06 .06 .06 .06 .06"/>
    <feFuncG type="table" tableValues="1 .55 .25 .44 .61 .75 .85 .88 .88 .88 .88"/>
    <feFuncB type="table" tableValues="1 .95 1 .84 .52 .32 .2 .18 .18 .18 .18"/>
    <feFuncA type="linear" slope="0" intercept="1"/>
   </feComponentTransfer>
  </filter>
  <filter id="fblk" x="0" y="0" width="100%" height="100%" color-interpolation-filters="sRGB">
   <feTurbulence type="fractalNoise" baseFrequency="0.81 0.45" numOctaves="1" seed="5" result="n"/>
   <feComposite in="SourceGraphic" in2="n" operator="arithmetic" k1="0" k2="1" k3="-1" k4="0" result="d"/>
   <feComponentTransfer in="d" result="t"><feFuncA type="linear" slope="200" intercept="0"/></feComponentTransfer>
   <feFlood flood-color="#000"/>
   <feComposite in2="t" operator="in"/>
  </filter>
  <filter id="fwht" x="0" y="0" width="100%" height="100%" color-interpolation-filters="sRGB">
   <feTurbulence type="fractalNoise" baseFrequency="0.87" numOctaves="1" seed="23" result="n"/>
   <feComposite in="SourceGraphic" in2="n" operator="arithmetic" k1="0" k2="1" k3="-1" k4="0" result="d"/>
   <feComponentTransfer in="d" result="t"><feFuncA type="linear" slope="200" intercept="0"/></feComponentTransfer>
   <feFlood flood-color="#d8e4ff"/>
   <feComposite in2="t" operator="in"/>
  </filter>
 </defs>
 <rect width="479" height="267" fill="#169a6a"/>
 <rect width="479" height="267" fill="url(#bsbase)" filter="url(#fbs)"/>
 <rect width="479" height="264" fill="url(#bssm)"/>
 <rect width="479" height="264" fill="url(#bswht)" filter="url(#fwht)"/>
 <rect width="479" height="264" fill="url(#bsblk)" filter="url(#fblk)"/>
 <g fill="#000" fill-opacity=".28"><rect x="0" y="80" width="479" height="1"/><rect x="0" y="92" width="479" height="1"/><rect x="0" y="140" width="479" height="1"/><rect x="0" y="186" width="479" height="1"/><rect x="0" y="25" width="479" height="1"/></g>
 <rect x="0" y="264" width="479" height="3" fill="#20e020"/>
 <rect x="0" y="264" width="479" height="3" fill="#000" fill-opacity=".5" filter="url(#fblk)"/>
 <rect x="0" y="0" width="1" height="267" fill="#2a7a4a"/>
</svg>
<div class="t tkb" style="left:557.5px;top:190.5px;width:60px;text-align:right;">4000</div>
<div class="abs" style="left:620px;top:196px;width:5px;height:1px;background:#000"></div>
<div class="t tkb" style="left:557.5px;top:223.7px;width:60px;text-align:right;">3500</div>
<div class="abs" style="left:620px;top:229px;width:5px;height:1px;background:#000"></div>
<div class="t tkb" style="left:557.5px;top:256.9px;width:60px;text-align:right;">3000</div>
<div class="abs" style="left:620px;top:262px;width:5px;height:1px;background:#000"></div>
<div class="t tkb" style="left:557.5px;top:290.1px;width:60px;text-align:right;">2500</div>
<div class="abs" style="left:620px;top:296px;width:5px;height:1px;background:#000"></div>
<div class="t tkb" style="left:557.5px;top:323.3px;width:60px;text-align:right;">2000</div>
<div class="abs" style="left:620px;top:329px;width:5px;height:1px;background:#000"></div>
<div class="t tkb" style="left:557.5px;top:356.5px;width:60px;text-align:right;">1500</div>
<div class="abs" style="left:620px;top:362px;width:5px;height:1px;background:#000"></div>
<div class="t tkb" style="left:557.5px;top:389.7px;width:60px;text-align:right;">1000</div>
<div class="abs" style="left:620px;top:395px;width:5px;height:1px;background:#000"></div>
<div class="t tkb" style="left:557.5px;top:422.9px;width:60px;text-align:right;">500</div>
<div class="abs" style="left:620px;top:428px;width:5px;height:1px;background:#000"></div>
<div class="t tkb" style="left:557.5px;top:456.1px;width:60px;text-align:right;">0</div>
<div class="abs" style="left:620px;top:462px;width:5px;height:1px;background:#000"></div>
<div class="abs" style="left:627px;top:463px;width:1px;height:4px;background:#000"></div>
<div class="abs" style="left:1104px;top:463px;width:1px;height:4px;background:#000"></div>
<div class="t tkb c" style="left:596.5px;top:470.5px;width:60px;">647285</div>
<div class="t tkb c" style="left:1072.5px;top:470.5px;width:60px;">647784</div>
<div class="t lbl c" style="left:529px;top:321px;width:100px;font-size:12px;transform:rotate(-90deg)">Range (m)</div>
<!-- colour bar 1 -->
<div class="abs" style="left:1130px;top:186px;width:20px;height:150px;background:#ff5cf0"></div>
<div class="abs" style="left:1131px;top:186px;width:18px;height:5px;background:#000;border:1px solid #cfcfcf;border-bottom:none"></div>
<div class="abs" style="left:1131px;top:191px;width:18px;height:138px;background:linear-gradient(180deg,#a000a0 0,#b00080 7%,#e00030 15%,#ff0000 22%,#ff6000 26.500%,#ffc000 31%,#ffff20 40%,#a0f000 45%,#00e000 52%,#10c040 61%,#208880 72.500%,#3060c8 79%,#3030ff 86%,#8070f0 92%,#d0d0e0 98%,#fff 100%)"></div>
<div class="abs" style="left:1131px;top:328px;width:18px;height:3px;background:#fff"></div>
<div class="abs" style="left:1131px;top:331px;width:18px;height:4px;background:#000"></div>
<div class="t tick" style="left:1152px;top:187px">--3.0</div>
<div class="t tick" style="left:1152px;top:255px">--5.5</div>
<div class="t tick" style="left:1152px;top:324px">--8.0</div>
<div class="t lbl c" style="left:1146.500px;top:254px;width:100px;font-size:12px;transform:rotate(90deg)">log B (/m/sr)</div>

<!-- ===== Doppler ===== -->
<div class="t" id="doptitle" style="left:555px;top:491px;font-size:15.5px;letter-spacing:0.00px">Doppler</div>
<div class="t lbl" id="avgn" style="left:729px;top:496px;font-size:12px;letter-spacing:-0.64px">Average number</div>
<div class="abs" style="left:822.500px;top:493px;width:22.500px;height:15px;background:#dcdcdc;box-shadow:0 0 0 2px #a3946f,-1px -1px 0 2px #7a6d50"></div>
<div class="t lbl" style="left:825px;top:495px;font-size:12px">1</div>
<div class="t lbl" style="left:852px;top:495px;font-size:12px">of</div>
<div class="abs" style="left:871px;top:493px;width:22.500px;height:15px;background:#dcdcdc;box-shadow:0 0 0 2px #a3946f,-1px -1px 0 2px #7a6d50"></div>
<div class="t lbl" style="left:874px;top:495px;font-size:12px">1</div>
<div class="t lbl" id="bslab" style="left:998px;top:493px;font-size:12px;letter-spacing:-0.26px">Backscatter</div>
<div class="abs" style="left:1088px;top:503px;width:12px;height:9px;border-radius:2px 2px 4px 4px;background:rgba(70,60,40,.6);filter:blur(.6px)"></div>
<div class="abs" style="left:1080px;top:494.500px;width:22.500px;height:11px;border-radius:5.500px;background:linear-gradient(180deg,#8a8a8a 0,#2a2a2a 35%,#111 70%,#444 100%)"></div>
<div class="abs" style="left:1078px;top:494px;width:11.500px;height:11.500px;border-radius:50%;background:radial-gradient(circle at 40% 35%,#fff 0,#d4d4d4 45%,#808080 100%)"></div>
<div class="abs plotpanel" style="left:552px;top:512px;width:575px;height:300px"></div>
<div class="abs" style="left:554px;top:514px;width:12px;height:296px;background:linear-gradient(90deg,#ccc0a6 0,#c6ba9e 78%,#b7aa8c 100%)"></div>
<div class="abs" style="left:1109px;top:514px;width:17px;height:296px;background:linear-gradient(90deg,#b7aa8c 0,#a79a7b 40%,#86785a 100%)"></div>
<svg style="left:626px;top:521px" width="479" height="267" viewBox="0 0 479 267">
 <defs>
  <linearGradient id="dpv" x1="0" y1="0" x2="0" y2="1">
   <stop offset="0" stop-color="#e6e234"/>
   <stop offset=".6" stop-color="#f4ea24"/>
   <stop offset=".8" stop-color="#fbee1e"/>
   <stop offset="1" stop-color="#f6ee28"/>
  </linearGradient>
  <radialGradient id="dpg" gradientUnits="userSpaceOnUse" cx="0" cy="208" r="185" gradientTransform="translate(0 208) scale(1 .6) translate(0 -208)">
   <stop offset="0" stop-color="#38e028" stop-opacity="1"/>
   <stop offset=".3" stop-color="#54e42a" stop-opacity=".97"/>
   <stop offset=".6" stop-color="#b0ee28" stop-opacity=".7"/>
   <stop offset="1" stop-color="#f0ee20" stop-opacity="0"/>
  </radialGradient>
  <radialGradient id="dpg2" gradientUnits="userSpaceOnUse" cx="0" cy="267" r="200" gradientTransform="translate(0 267) scale(1 .25) translate(0 -267)">
   <stop offset="0" stop-color="#9aea2c" stop-opacity=".9"/>
   <stop offset="1" stop-color="#e8ee20" stop-opacity="0"/>
  </radialGradient>
  <radialGradient id="dpo" gradientUnits="userSpaceOnUse" cx="479" cy="222" r="300" gradientTransform="translate(479 222) scale(1 .2) translate(-479 -222)">
   <stop offset="0" stop-color="#fdb612" stop-opacity=".9"/>
   <stop offset=".5" stop-color="#fdc414" stop-opacity=".65"/>
   <stop offset="1" stop-color="#fbd818" stop-opacity="0"/>
  </radialGradient>
  <radialGradient id="dpo2" gradientUnits="userSpaceOnUse" cx="479" cy="170" r="220" gradientTransform="translate(479 170) scale(1 .2) translate(-479 -170)">
   <stop offset="0" stop-color="#fdb612" stop-opacity=".6"/>
   <stop offset="1" stop-color="#fbd818" stop-opacity="0"/>
  </radialGradient>
  <linearGradient id="dprnd" x1="0" y1="0" x2="0" y2="1">
   <stop offset="0" stop-color="#000" stop-opacity="0.579"/>
   <stop offset="0.25" stop-color="#000" stop-opacity="0.541"/>
   <stop offset="0.5" stop-color="#000" stop-opacity="0.472"/>
   <stop offset="0.625" stop-color="#000" stop-opacity="0.391"/>
   <stop offset="0.75" stop-color="#000" stop-opacity="0.311"/>
   <stop offset="0.81" stop-color="#000" stop-opacity="0.264"/>
   <stop offset="0.875" stop-color="#000" stop-opacity="0.212"/>
   <stop offset="1" stop-color="#000" stop-opacity="0.150"/>
  </linearGradient>
  <linearGradient id="dpmag" x1="0" y1="0" x2="0" y2="1">
   <stop offset="0" stop-color="#000" stop-opacity="0.562"/>
   <stop offset="0.25" stop-color="#000" stop-opacity="0.550"/>
   <stop offset="0.5" stop-color="#000" stop-opacity="0.503"/>
   <stop offset="0.625" stop-color="#000" stop-opacity="0.452"/>
   <stop offset="0.75" stop-color="#000" stop-opacity="0.337"/>
   <stop offset="0.81" stop-color="#000" stop-opacity="0.273"/>
   <stop offset="0.875" stop-color="#000" stop-opacity="0.212"/>
   <stop offset="1" stop-color="#000" stop-opacity="0.202"/>
  </linearGradient>
  <linearGradient id="dpblk" x1="0" y1="0" x2="0" y2="1">
   <stop offset="0" stop-color="#000" stop-opacity="0.497"/>
   <stop offset="0.25" stop-color="#000" stop-opacity="0.494"/>
   <stop offset="0.5" stop-color="#000" stop-opacity="0.483"/>
   <stop offset="0.625" stop-color="#000" stop-opacity="0.457"/>
   <stop offset="0.75" stop-color="#000" stop-opacity="0.365"/>
   <stop offset="0.81" stop-color="#000" stop-opacity="0.291"/>
   <stop offset="0.875" stop-color="#000" stop-opacity="0.231"/>
   <stop offset="1" stop-color="#000" stop-opacity="0.212"/>
  </linearGradient>
  <filter id="frnd" x="0" y="0" width="100%" height="100%" color-interpolation-filters="sRGB">
   <feTurbulence type="fractalNoise" baseFrequency="0.84 0.45" numOctaves="1" seed="61" result="n"/>
   <feComposite in="SourceGraphic" in2="n" operator="arithmetic" k1="0" k2="1" k3="-1" k4="0" result="d"/>
   <feComponentTransfer in="d" result="t"><feFuncA type="linear" slope="200" intercept="0"/></feComponentTransfer>
   <feTurbulence type="fractalNoise" baseFrequency="0.77" numOctaves="1" seed="161" result="n2"/>
   <feColorMatrix in="n2" type="matrix" values="3.4 0 0 0 -1.2  3.4 0 0 0 -1.2  3.4 0 0 0 -1.2  0 0 0 0 1" result="g"/>
   <feComponentTransfer in="g" result="col">
    <feFuncR type="table" tableValues="1 .55 .2 .15 .1 .0 .7 1 1 .8 .6"/>
    <feFuncG type="table" tableValues="1 .5 .2 .45 .7 .88 .95 .8 0 0 0"/>
    <feFuncB type="table" tableValues="1 .95 1 .75 .3 0 0 0 0 .4 .65"/>
   </feComponentTransfer>
   <feComposite in="col" in2="t" operator="in"/>
  </filter>
  <filter id="fmag" x="0" y="0" width="100%" height="100%" color-interpolation-filters="sRGB">
   <feTurbulence type="fractalNoise" baseFrequency="0.79 0.45" numOctaves="1" seed="41" result="n"/>
   <feComposite in="SourceGraphic" in2="n" operator="arithmetic" k1="0" k2="1" k3="-1" k4="0" result="d"/>
   <feComponentTransfer in="d" result="t"><feFuncA type="linear" slope="200" intercept="0"/></feComponentTransfer>
   <feFlood flood-color="#e21fe0"/>
   <feComposite in2="t" operator="in"/>
  </filter>
  <filter id="fblk2" x="0" y="0" width="100%" height="100%" color-interpolation-filters="sRGB">
   <feTurbulence type="fractalNoise" baseFrequency="0.82 0.45" numOctaves="1" seed="9" result="n"/>
   <feComposite in="SourceGraphic" in2="n" operator="arithmetic" k1="0" k2="1" k3="-1" k4="0" result="d"/>
   <feComponentTransfer in="d" result="t"><feFuncA type="linear" slope="200" intercept="0"/></feComponentTransfer>
   <feFlood flood-color="#000"/>
   <feComposite in2="t" operator="in"/>
  </filter>
 </defs>
 <rect width="479" height="267" fill="url(#dpv)"/>
 <rect width="479" height="267" fill="url(#dpg)"/>
 <rect width="479" height="267" fill="url(#dpg2)"/>
 <rect width="479" height="267" fill="url(#dpo)"/>
 <rect width="479" height="267" fill="url(#dpo2)"/>
 <rect width="479" height="262" fill="url(#dprnd)" filter="url(#frnd)"/>
 <rect width="479" height="262" fill="url(#dpmag)" filter="url(#fmag)"/>
 <rect width="479" height="262" fill="url(#dpblk)" filter="url(#fblk2)"/>
 <rect x="0" y="262" width="479" height="2" fill="#e21fe0"/>
 <rect x="0" y="264" width="479" height="3" fill="#40e030"/>
 <rect x="0" y="264" width="479" height="3" fill="#000" fill-opacity=".5" filter="url(#fblk2)"/>
 <rect x="0" y="0" width="1" height="267" fill="#5a7a3a"/>
</svg>

<div class="t tkb" style="left:557.5px;top:516.5px;width:60px;text-align:right;">4000</div>
<div class="abs" style="left:620px;top:522px;width:5px;height:1px;background:#000"></div>
<div class="t tkb" style="left:557.5px;top:549.7px;width:60px;text-align:right;">3500</div>
<div class="abs" style="left:620px;top:555px;width:5px;height:1px;background:#000"></div>
<div class="t tkb" style="left:557.5px;top:582.9px;width:60px;text-align:right;">3000</div>
<div class="abs" style="left:620px;top:588px;width:5px;height:1px;background:#000"></div>
<div class="t tkb" style="left:557.5px;top:616.1px;width:60px;text-align:right;">2500</div>
<div class="abs" style="left:620px;top:622px;width:5px;height:1px;background:#000"></div>
<div class="t tkb" style="left:557.5px;top:649.3px;width:60px;text-align:right;">2000</div>
<div class="abs" style="left:620px;top:655px;width:5px;height:1px;background:#000"></div>
<div class="t tkb" style="left:557.5px;top:682.5px;width:60px;text-align:right;">1500</div>
<div class="abs" style="left:620px;top:688px;width:5px;height:1px;background:#000"></div>
<div class="t tkb" style="left:557.5px;top:715.7px;width:60px;text-align:right;">1000</div>
<div class="abs" style="left:620px;top:721px;width:5px;height:1px;background:#000"></div>
<div class="t tkb" style="left:557.5px;top:748.9px;width:60px;text-align:right;">500</div>
<div class="abs" style="left:620px;top:754px;width:5px;height:1px;background:#000"></div>
<div class="t tkb" style="left:557.5px;top:782.1px;width:60px;text-align:right;">0</div>
<div class="abs" style="left:620px;top:788px;width:5px;height:1px;background:#000"></div>
<div class="abs" style="left:627px;top:789px;width:1px;height:4px;background:#000"></div>
<div class="abs" style="left:1104px;top:789px;width:1px;height:4px;background:#000"></div>
<div class="t tkb c" style="left:596.5px;top:796.5px;width:60px;">647285</div>
<div class="t tkb c" style="left:1072.5px;top:796.5px;width:60px;">647784</div>
<div class="t lbl c" style="left:529px;top:648px;width:100px;font-size:12px;transform:rotate(-90deg)">Range (m)</div>
<!-- colour bar 2 -->
<div class="abs" style="left:1130px;top:512px;width:20px;height:150px;background:#000"></div>
<div class="abs" style="left:1131px;top:512px;width:18px;height:5px;background:#f020f0"></div>
<div class="abs" style="left:1131px;top:518px;width:18px;height:137px;background:linear-gradient(180deg,#a000a0 0,#b00080 7%,#e00030 15%,#ff0000 22%,#ff6000 26.500%,#ffc000 31%,#ffff20 40%,#a0f000 45%,#00e000 52%,#10c040 61%,#208880 72.500%,#3060c8 79%,#3030ff 86%,#8070f0 92%,#d0d0e0 98%,#fff 100%)"></div>
<div class="abs" style="left:1131px;top:654px;width:18px;height:3px;background:#fff"></div>
<div class="t tick" style="left:1152px;top:513px">-10.0</div>
<div class="t tick" style="left:1152px;top:581px">-0.0</div>
<div class="t tick" style="left:1152px;top:650px">--10.0</div>
<div class="t lbl c" style="left:1152px;top:579px;width:100px;font-size:12px;transform:rotate(90deg)">Velocity (m/s)</div>
<!-- ===== remote taskbar ===== -->
<div class="abs" style="left:88px;top:921px;width:1442px;height:49px;background:#1c1c1c"></div>
<svg style="left:152px;top:936px" width="22" height="22" viewBox="0 0 22 22">
 <path d="M4 6.500h9.500v9h-9.500z" fill="none" stroke="#fff" stroke-width="1.200"/>
 <path d="M3.500 5V3.500h10.500V5M3.500 17v1.500h10.500V17" fill="none" stroke="#fff" stroke-width="1.100"/>
 <path d="M17.500 3v15.500" stroke="#fff" stroke-width="1.100"/>
 <rect x="16.300" y="7.200" width="2.600" height="2.600" fill="#fff"/>
</svg>
<svg style="left:201px;top:935px" width="26" height="24" viewBox="0 0 26 24">
 <path d="M2 3h8l2 2h11v4H2z" fill="#e8a92c"/>
 <rect x="2" y="6" width="21" height="14" fill="#fbd25c"/>
 <rect x="2" y="17" width="21" height="3" fill="#e9b43a"/>
 <path d="M8 13h10v7h-3v-4h-4v4H8z" fill="#3d9be4"/>
</svg>
<div class="abs" style="left:194px;top:965px;width:40px;height:2px;background:#7ea6d6"></div>
<svg style="left:250px;top:934px" width="26" height="26" viewBox="0 0 26 26">
 <circle cx="13" cy="14" r="11" fill="#ff9a1f"/>
 <path d="M3 10C5 4 10 2 13 3c-1 2 0 3 2 4 5 1 9 5 8 11-1 5-6 7-10 7C6 25 1 19 3 10z" fill="#ff5a2a"/>
 <path d="M14 1c2 2 4 4 4 7 3 1 5 4 5 8-2-4-5-5-8-5-2-3-2-7-1-10z" fill="#ffd23a"/>
 <circle cx="13" cy="15" r="5.500" fill="#7d3fd0"/>
 <circle cx="14" cy="14" r="3.200" fill="#5a2fb0"/>
 <path d="M3 12c2 6 8 9 14 6-3 4-9 5-13 1-1-2-2-4-1-7z" fill="#ff3d5a" opacity=".7"/>
</svg>
<div class="abs" style="left:288px;top:927px;width:48px;height:40px;background:#4a4a4a"></div>
<div class="abs" style="left:288px;top:965px;width:48px;height:2px;background:#8fb4e0"></div>
<svg style="left:301px;top:937px" width="22" height="20" viewBox="0 0 22 20">
 <rect x=".5" y=".5" width="21" height="17" fill="#e9eef4" stroke="#c8d0da"/>
 <rect x="2" y="3" width="10" height="13" fill="#1f7a4a"/>
 <rect x="3" y="4" width="8" height="5" fill="#2b9a7a"/>
 <rect x="13.500" y="5" width="6" height="1.500" fill="#7a8696"/><rect x="13.500" y="8" width="6" height="1.500" fill="#7a8696"/><rect x="13.500" y="11" width="6" height="1.500" fill="#7a8696"/>
 <rect x="19" y="1.500" width="1.500" height="3" fill="#2b9a5a"/>
</svg>
<div class="abs" style="left:349px;top:936px;width:23px;height:23px;background:#d2d2d2"></div>
<div class="t" style="left:350px;top:937px;font-size:8.500px;line-height:8px;color:#222;white-space:normal;width:24px;letter-spacing:-.3px">Scan<br>sched</div>
<div class="abs" style="left:341px;top:965px;width:40px;height:2px;background:#7ea6d6"></div>
<svg style="left:400px;top:936px" width="21" height="24" viewBox="0 0 21 24">
 <rect width="21" height="24" fill="#2a2fd0"/>
 <g stroke="#b8c0ff" stroke-width="1.200"><path d="M1 9.500h19M1 12.500h19M1 15.500h19M1 18.500h19M1 21.500h19"/></g>
 <text x="10.500" y="6.500" font-family="Liberation Sans,sans-serif" font-size="6" font-weight="bold" fill="#cfd6ff" text-anchor="middle">WEEK</text>
</svg>
<div class="abs" style="left:390px;top:965px;width:31px;height:2px;background:#7ea6d6"></div>
<div class="abs" style="left:422px;top:965px;width:8px;height:2px;background:#5f7fa8"></div>
<div class="abs" style="left:1367px;top:927px;width:36px;height:40px;background:#fff"></div>
<div class="t c" style="left:1367px;top:941px;width:36px;font-size:12px;color:#222;letter-spacing:-.2px">ENG</div>
<div class="t c" style="left:1407px;top:932px;width:62px;font-size:12px;color:#fff;letter-spacing:-.4px">06:20</div>
<div class="t c" style="left:1404px;top:950px;width:68px;font-size:12px;color:#fff;letter-spacing:-.4px">04/09/2023</div>
<svg style="left:1484px;top:938px" width="18" height="18" viewBox="0 0 18 18"><path d="M1.500 1.500h15v11h-5l-2.500 2.500-2.500-2.500h-5z" fill="none" stroke="#fff" stroke-width="1.200"/></svg>
</body>
</html>
